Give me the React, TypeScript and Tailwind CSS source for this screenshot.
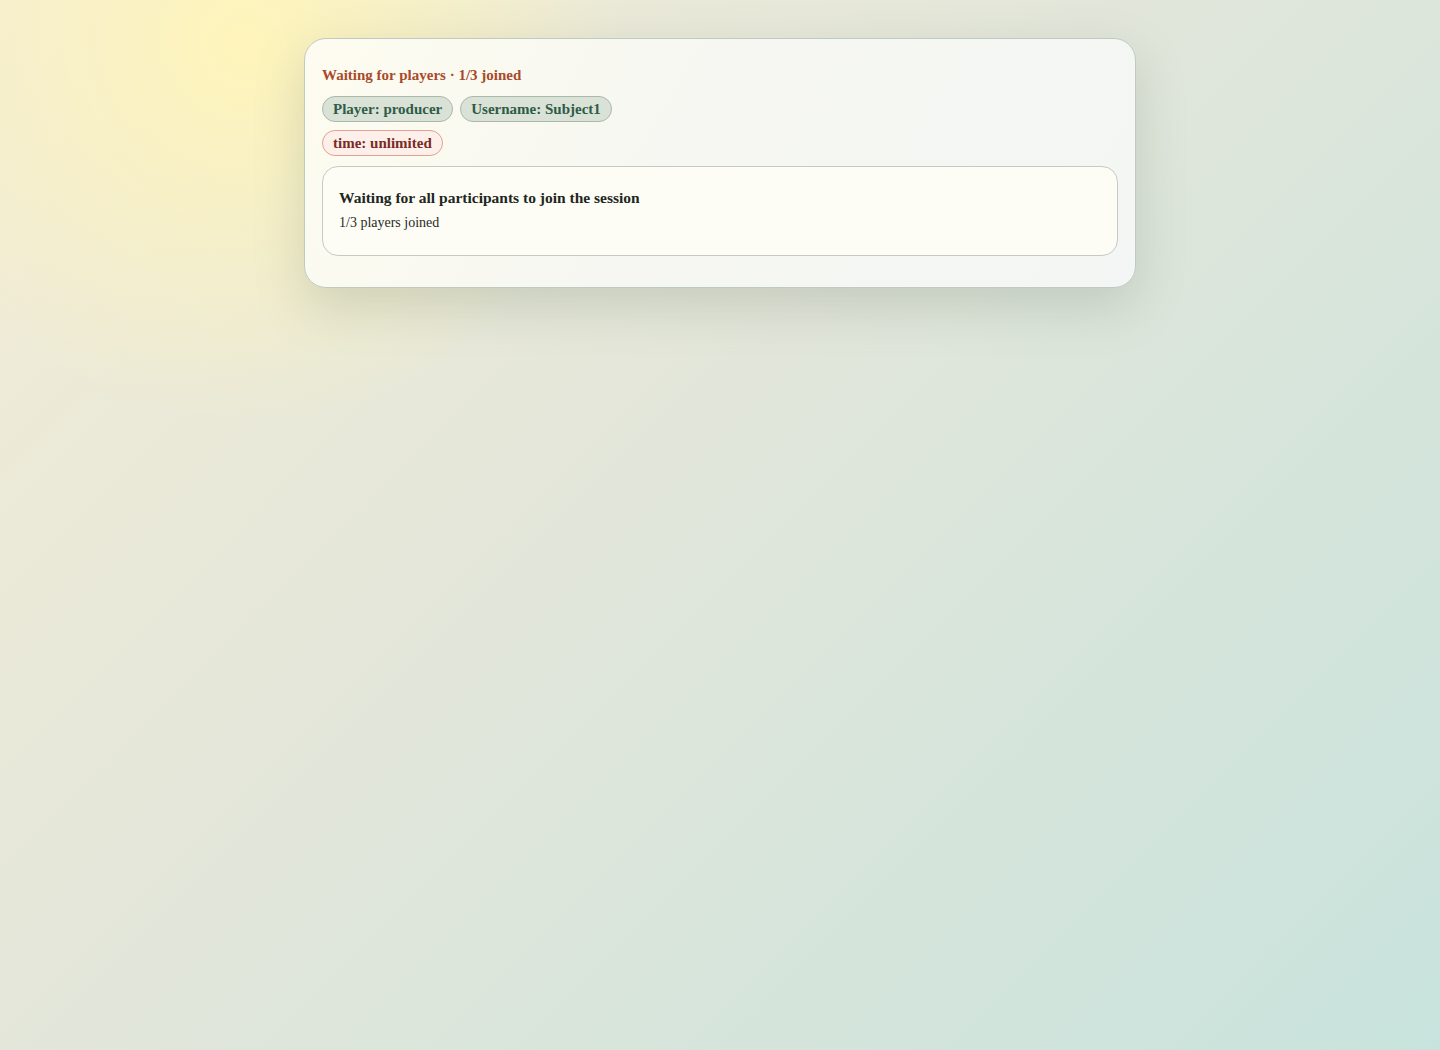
import React from 'react';

const serif = { fontFamily: '"Liberation Serif", "DejaVu Serif", serif' };

const Pill: React.FC<{ tone: 'green' | 'red'; children: React.ReactNode }> = ({ tone, children }) => (
  <span
    className={`inline-flex h-[26px] items-center rounded-full border px-[10px] text-[15px] font-bold leading-none ${
      tone === 'green'
        ? 'border-[#a9b9a9] bg-[#dae2d8] text-[#2f5c46]'
        : 'border-[#e4a091] bg-[#fdf0ea] text-[#7a2b25]'
    }`}
  >
    {children}
  </span>
);

const App: React.FC = () => {
  return (
    <div
      className="relative min-h-[1050px] w-full overflow-hidden bg-[linear-gradient(135deg,#f4edd6_0%,#e2e6da_45%,#c8e3dd_100%)]"
      style={serif}
    >
      <div className="pointer-events-none absolute inset-0 bg-[radial-gradient(circle_at_245px_45px,rgba(255,245,185,0.95)_0px,rgba(255,245,185,0.55)_160px,rgba(255,245,185,0)_380px)]" />

      <div className="relative pt-[38px]">
        <div className="mx-auto w-[832px] rounded-[22px] border border-[#bfcac1] bg-[linear-gradient(120deg,#fefcf0_0%,#f6f7f2_45%,#f3f6f4_100%)] px-[17px] pt-[27px] pb-[31px] shadow-[0_18px_50px_rgba(90,110,90,0.22)]">
          <div className="text-[15px] font-bold leading-[18px] text-[#a84a2b]">
            Waiting for players · 1/3 joined
          </div>

          <div className="mt-[12px] flex flex-wrap gap-[7px]">
            <Pill tone="green">Player: producer</Pill>
            <Pill tone="green">Username: Subject1</Pill>
          </div>
          <div className="mt-[8px] flex">
            <Pill tone="red">time: unlimited</Pill>
          </div>

          <div className="mt-[10px] rounded-[16px] border border-[#c3cbc2] bg-[#fdfdf5] px-[16px] pt-[22px] pb-[23px]">
            <div className="text-[15.5px] font-bold leading-[18px] text-[#1e2722]">
              Waiting for all participants to join the session
            </div>
            <div className="mt-[7px] text-[14px] leading-[18px] text-[#2a2a26]">1/3 players joined</div>
          </div>
        </div>
      </div>
    </div>
  );
};

export default App;
